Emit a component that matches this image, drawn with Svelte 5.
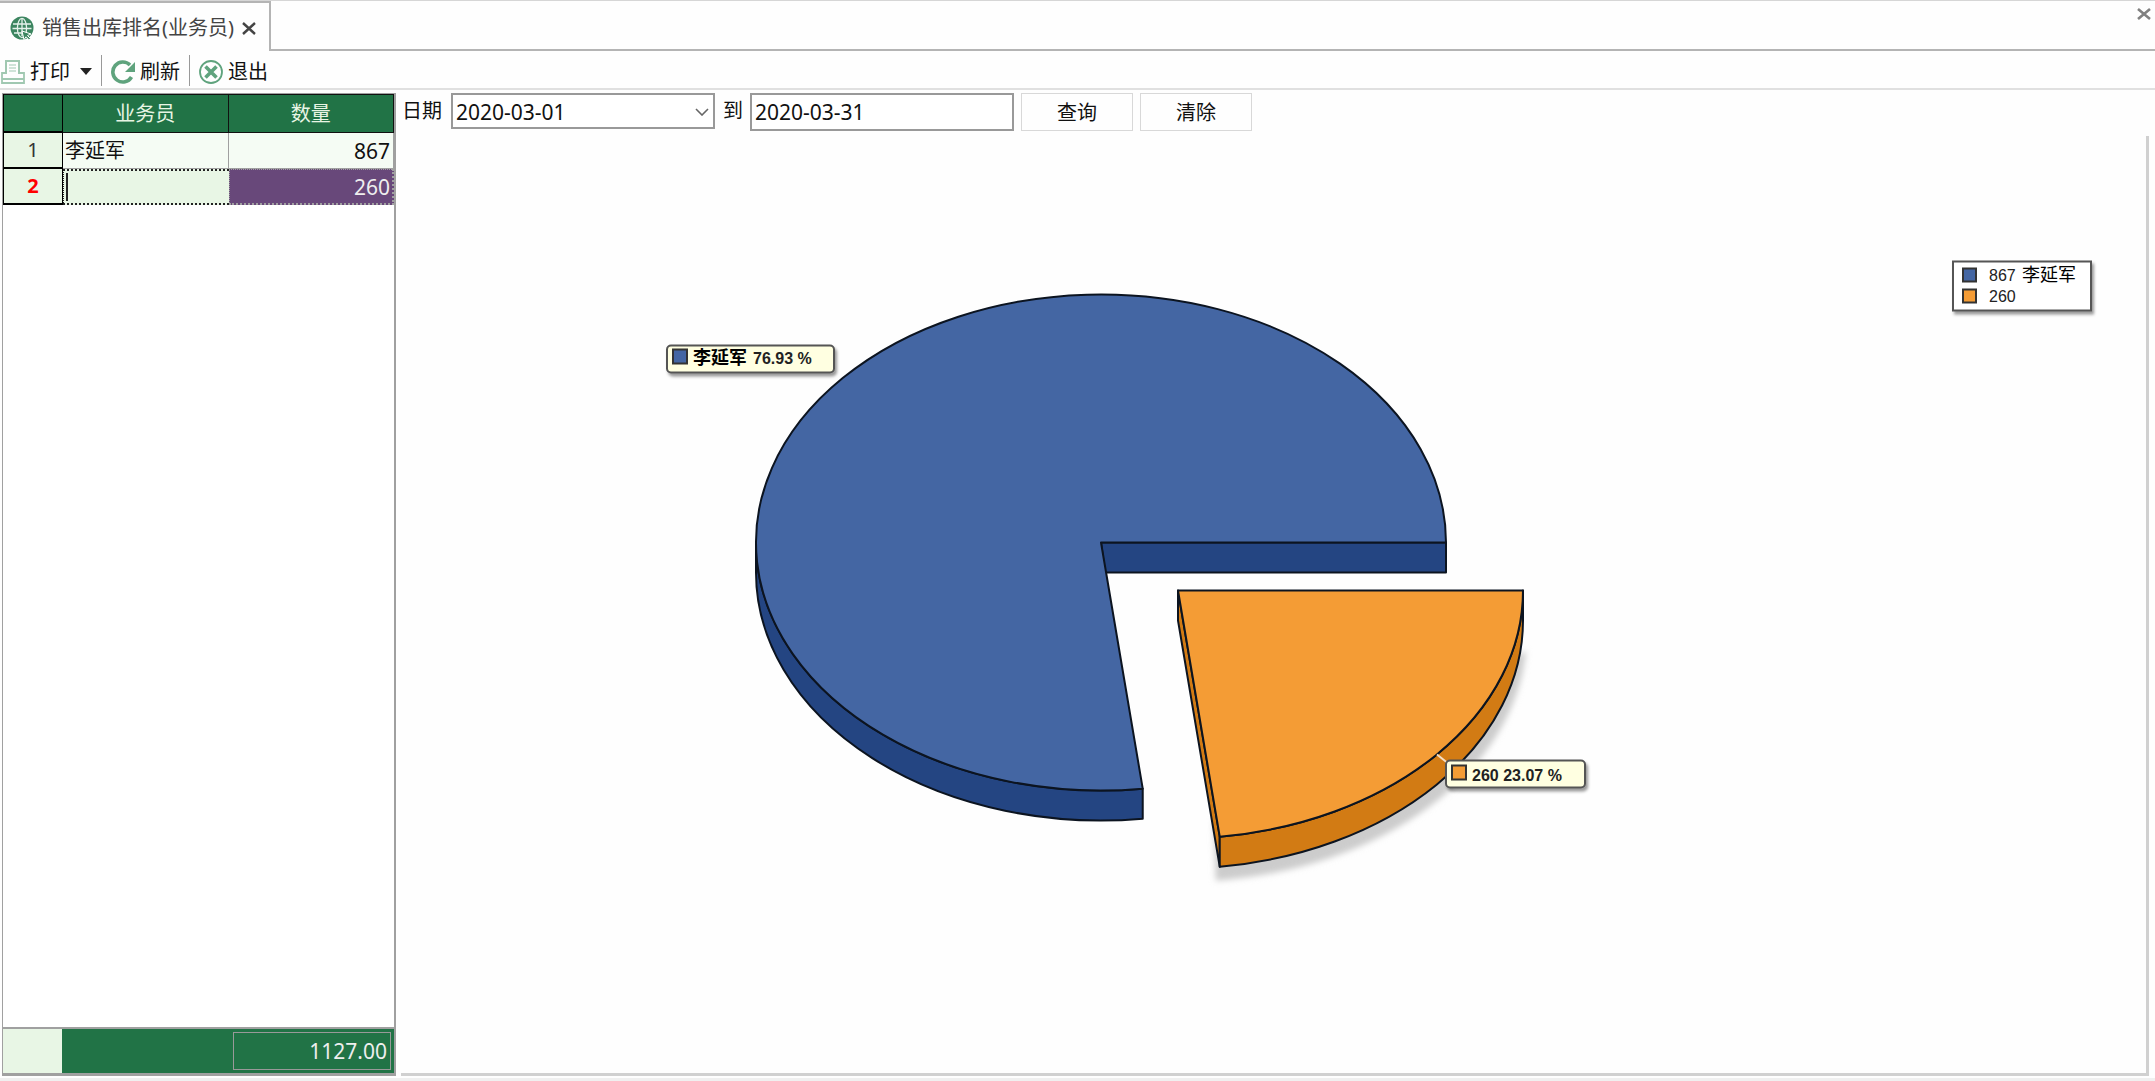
<script lang="ts">
	type Row = { name: string; qty: number };

	const rows: Row[] = [
		{ name: '李延军', qty: 867 },
		{ name: '', qty: 260 }
	];

	let selected = $state(1);
	let dateFrom = $state('2020-03-01');
	let dateTo = $state('2020-03-31');

	const total = rows.reduce((sum, row) => sum + row.qty, 0);

	// pie geometry, in viewBox units
	const rx = 345;
	const ry = 248;
	const depth = 30;
	const blue = { x: 700, y: 406 };
	const orange = { x: 777, y: 454 };
	const angle = (rows[1].qty / total) * Math.PI * 2;
	const cutX = rx * Math.cos(angle);
	const cutY = ry * Math.sin(angle);
</script>

<div class="window">
	<header class="tabs">
		<div class="tab">
			<svg width="24" height="24" viewBox="0 0 24 24" aria-hidden="true">
				<circle cx="12" cy="12" r="11.5" fill="#3c8560" />
				<g fill="none" stroke="#e4f1ea" stroke-width="1.3">
					<ellipse cx="12" cy="12" rx="4.6" ry="9.6" />
					<path d="M12 2v18M3 8h18M2.500 12.500h19M4 17h9" />
				</g>
				<path d="M12 15l9 3-3.500 1.500 3 3-1.500 1.300-3-3-2 3z" fill="#3c8560" stroke="#fff" stroke-width="1" />
			</svg>
			<span>销售出库排名(业务员)</span>
			<button class="close" aria-label="关闭标签">
				<svg width="14" height="14" viewBox="0 0 14 14"><path d="M1 2l12 11M13 2L1 13" stroke="#444" stroke-width="2.400" /></svg>
			</button>
		</div>
		<div class="tab-rest">
			<button class="close" aria-label="关闭">
				<svg width="14" height="14" viewBox="0 0 14 14"><path d="M1 2l12 10M13 2L1 12" stroke="#808080" stroke-width="2.600" /></svg>
			</button>
		</div>
	</header>

	<div class="toolbar">
		<button>
			<svg width="24" height="24" viewBox="0 0 24 24" fill="none" stroke="#a0c8b1" stroke-width="2" aria-hidden="true">
				<path d="M5 14V1h13v13" />
				<path d="M8 5h7M8 8h7M8 11h7" stroke-width="1.200" />
				<path d="M5 13H1v10h22V13h-5M1 19h22" stroke-width="1.800" />
			</svg>
			打印
			<svg class="arrow" width="12" height="7" viewBox="0 0 12 7" aria-hidden="true"><path d="M0 0h12L6 7z" fill="#222" /></svg>
		</button>
		<button>
			<svg width="24" height="24" viewBox="0 0 24 24" aria-hidden="true">
				<path d="M20.500 17A10 10 0 1 1 19 5" fill="none" stroke="#5fa37d" stroke-width="3.600" />
				<path d="M24 2v10H14z" fill="#5fa37d" />
			</svg>
			刷新
		</button>
		<button>
			<svg width="24" height="24" viewBox="0 0 24 24" fill="none" stroke="#5fa37d" aria-hidden="true">
				<circle cx="12" cy="12" r="11" stroke-width="1.800" />
				<path d="M6.500 6.500l11 11M17.500 6.500l-11 11" stroke-width="3.600" />
			</svg>
			退出
		</button>
	</div>

	<main>
		<section class="grid">
			<table>
				<thead>
					<tr>
						<th class="index" aria-label="序号"></th>
						<th>业务员</th>
						<th>数量</th>
					</tr>
				</thead>
				<tbody>
					{#each rows as row, i (i)}
						<tr class:selected={i === selected} onclick={() => (selected = i)}>
							<td class="index">{i + 1}</td>
							<td class="name">{#if i === selected}<span class="caret"></span>{/if}{row.name}</td>
							<td class="qty">{row.qty}</td>
						</tr>
					{/each}
				</tbody>
			</table>
			<div class="summary">
				<span class="gutter"></span>
				<output>{total.toFixed(2)}</output>
			</div>
		</section>

		<section class="report">
			<form class="query" onsubmit={(e) => e.preventDefault()}>
				<label for="from">日期</label>
				<div class="combo">
					<select id="from" bind:value={dateFrom}>
						<option>2020-03-01</option>
					</select>
					<svg width="14" height="8" viewBox="0 0 14 8" aria-hidden="true"><path d="M1 1l6 6 6-6" fill="none" stroke="#666" stroke-width="1.600" /></svg>
				</div>
				<label for="to">到</label>
				<input id="to" type="text" bind:value={dateTo} />
				<button type="submit">查询</button>
				<button type="reset">清除</button>
			</form>

			<div class="chart">
				<svg viewBox="0 0 1745 936" role="img" aria-label="销售出库排名">
					<defs>
						<filter id="soft" x="-10%" y="-10%" width="120%" height="120%">
							<feGaussianBlur stdDeviation="3" />
						</filter>
						<filter id="drop" x="-10%" y="-20%" width="120%" height="150%">
							<feDropShadow dx="2" dy="3" stdDeviation="1.500" flood-color="#000" flood-opacity="0.4" />
						</filter>
					</defs>

					<!-- 李延军 -->
					<g class="slice">
						<path
							class="blue-side"
							d="M{blue.x} {blue.y}h{rx}v{depth}H{blue.x + 4}z"
						/>
						<path
							class="blue-side"
							d="M{blue.x - rx} {blue.y}v{depth}A{rx} {ry} 0 0 0 {blue.x + cutX} {blue.y + depth + cutY}v{-depth}A{rx} {ry} 0 0 1 {blue.x - rx} {blue.y}z"
						/>
						<path
							class="blue-top"
							d="M{blue.x} {blue.y}L{blue.x + cutX} {blue.y + cutY}A{rx} {ry} 0 1 1 {blue.x + rx} {blue.y}z"
						/>
					</g>

					<!-- 260 -->
					<path
						class="shadow"
						filter="url(#soft)"
						d="M{orange.x + cutX - 4} {orange.y + cutY + depth + 14}l-2 -60L{orange.x + rx + 3} {orange.y + 60}A{rx} {ry} 0 0 1 {orange.x + cutX - 4} {orange.y + cutY + depth + 14}z"
					/>
					<g class="slice">
						<path
							class="orange-side"
							d="M{orange.x} {orange.y}v{depth}L{orange.x + cutX} {orange.y + cutY + depth}v{-depth}z"
						/>
						<path
							class="orange-side"
							d="M{orange.x + rx} {orange.y}v{depth}A{rx} {ry} 0 0 1 {orange.x + cutX} {orange.y + cutY + depth}v{-depth}A{rx} {ry} 0 0 0 {orange.x + rx} {orange.y}z"
						/>
						<path
							class="orange-top"
							d="M{orange.x} {orange.y}H{orange.x + rx}A{rx} {ry} 0 0 1 {orange.x + cutX} {orange.y + cutY}z"
						/>
					</g>
					<path d="M1036 618l10 8" stroke="#f6dfc4" stroke-width="2" />

					<g class="tip">
						<rect class="box" x="266" y="209" width="167" height="27" rx="4" filter="url(#drop)" />
						<rect class="swatch blue-top" x="272" y="213" width="14" height="14" />
						<text x="292" y="227"><tspan class="cjk">李延军</tspan><tspan x="352">76.93 %</tspan></text>
					</g>
					<g class="tip">
						<rect class="box" x="1045" y="624" width="139" height="27" rx="4" filter="url(#drop)" />
						<rect class="swatch orange-top" x="1051" y="629" width="14" height="14" />
						<text x="1071" y="644">260 23.07 %</text>
					</g>

					<g class="legend">
						<rect class="box" x="1552" y="125" width="138" height="49" filter="url(#drop)" />
						<rect class="swatch blue-top" x="1562" y="132" width="13" height="13" />
						<text x="1588" y="144">867<tspan class="cjk" x="1621">李延军</tspan></text>
						<rect class="swatch orange-top" x="1562" y="153" width="13" height="13" />
						<text x="1588" y="165">260</text>
					</g>
				</svg>
			</div>
		</section>
	</main>
</div>

<style>
	:global(body) {
		margin: 0;
		background: #fefefe;
	}

	.window {
		display: flex;
		flex-direction: column;
		box-sizing: border-box;
		height: 100vh;
		border-top: 1px solid #d6d6d6;
		border-bottom: 3px solid #f0f0f0;
		color: #111;
		font-family: 'Noto Sans', 'Noto Sans CJK SC', sans-serif;
		font-size: 20px;
		line-height: 28px;
	}

	button,
	input,
	select {
		box-sizing: border-box;
		margin: 0;
		border: 0;
		background: none;
		color: inherit;
		font: inherit;
	}

	svg {
		display: block;
		flex: none;
	}

	.tabs {
		display: flex;
		height: 50px;
	}

	.tab {
		display: flex;
		align-items: center;
		box-sizing: border-box;
		padding: 2px 13px 0 10px;
		border-top: 2px solid #b4b4b4;
		border-right: 2px solid #b4b4b4;
		color: #444;
	}

	.tab span {
		margin: 0 8px;
	}

	.close {
		padding: 0;
	}

	.tab-rest {
		display: flex;
		flex: 1;
		align-items: flex-start;
		justify-content: flex-end;
		padding: 6px 4px 0 0;
		border-bottom: 2px solid #b4b4b4;
	}

	.toolbar {
		display: flex;
		align-items: center;
		height: 35px;
		padding-top: 2px;
		border-bottom: 2px solid #e0e0e0;
	}

	.toolbar button {
		display: flex;
		align-items: center;
		gap: 5px;
		height: 31px;
		padding: 2px 9px 0;
	}

	.toolbar button + button {
		border-left: 1px solid #999;
	}

	.toolbar button:first-child {
		padding-left: 1px;
	}

	.arrow {
		margin-left: 5px;
	}

	main {
		display: flex;
		flex: 1;
		gap: 5px;
		min-height: 0;
		padding: 3px 6px 2px 2px;
	}

	.grid {
		display: flex;
		flex: none;
		flex-direction: column;
		justify-content: space-between;
		box-sizing: border-box;
		width: 394px;
		border: 1px solid #a0a0a0;
		border-width: 1px 2px 3px 1px;
		background: #fff;
	}

	table {
		width: 100%;
		table-layout: fixed;
		border-collapse: separate;
		border-spacing: 0;
	}

	th,
	td {
		box-sizing: border-box;
		height: 36px;
		padding: 0 3px;
		border-right: 1px solid #a0a0a0;
		border-bottom: 1px solid #a0a0a0;
		background: #f5fcf4;
	}

	th {
		height: 39px;
		border: 1px solid #111;
		border-left: 0;
		background: #217346;
		color: #e8f5e4;
		font-weight: 400;
	}

	.index {
		width: 60px;
		border-right: 1px solid #000;
		border-bottom: 2px solid #000;
		border-left: 1px solid #000;
		text-align: center;
	}

	td.index {
		background: #e8f6e5;
		color: #333;
	}

	td.name {
		padding-left: 2px;
	}

	.qty {
		font-size: 21px;
		text-align: right;
	}

	.selected .index {
		color: #f00;
		font-weight: 700;
	}

	.selected .name {
		border: 2px dotted #222;
		border-width: 2px 0 2px 1px;
		background: #e8f6e5;
	}

	.selected .qty {
		border: 2px dotted #a0a0a0;
		border-width: 1px 2px 2px 1px;
		padding-right: 2px;
		background: #68487a;
		color: #eee;
	}

	.caret {
		display: block;
		width: 2px;
		height: 28px;
		background: #222;
	}

	.summary {
		display: flex;
		justify-content: space-between;
		box-sizing: border-box;
		height: 46px;
		border-top: 2px solid #a0a0a0;
		background: #217346;
	}

	.gutter {
		width: 59px;
		background: #e8f6e5;
	}

	output {
		box-sizing: border-box;
		width: 158px;
		margin: 3px;
		padding: 4px 3px;
		border: 1px solid #999;
		color: #eee;
		font-size: 21px;
		text-align: right;
	}

	.report {
		display: flex;
		flex: 1;
		flex-direction: column;
		min-width: 0;
	}

	.query {
		display: flex;
		align-items: flex-start;
		gap: 7px;
		height: 43px;
	}

	.query label {
		padding: 3px 0 3px 1px;
		line-height: 30px;
	}

	.combo {
		position: relative;
		margin-left: 2px;
	}

	.combo svg {
		position: absolute;
		top: 15px;
		right: 6px;
		pointer-events: none;
	}

	select,
	input {
		width: 264px;
		height: 36px;
		padding: 2px 3px 0;
		border: 2px solid #999;
		background: #fff;
		font-size: 21px;
		appearance: none;
	}

	input {
		height: 38px;
		padding-top: 0;
	}

	.query button {
		width: 112px;
		height: 38px;
		padding-top: 2px;
		border: 1px solid #d8d8d8;
	}

	.chart {
		flex: 1;
		min-height: 0;
		border-right: 3px solid #d0d0d0;
		border-bottom: 3px solid #d0d0d0;
	}

	.chart svg {
		width: 100%;
		height: 100%;
	}

	.slice path {
		stroke: #0c1420;
		stroke-width: 2px;
		stroke-linejoin: round;
	}

	.blue-top {
		fill: #4466a3;
	}

	.blue-side {
		fill: #244582;
	}

	.orange-top {
		fill: #f49c35;
	}

	.orange-side {
		fill: #d27b14;
	}

	.shadow {
		fill: #ccc;
	}

	.box {
		fill: #fff;
		stroke: #555;
		stroke-width: 2px;
	}

	.tip .box {
		fill: #ffffe1;
	}

	.swatch {
		stroke: #333;
		stroke-width: 2px;
	}

	.tip text,
	.legend text {
		fill: #222;
		font-family: 'Liberation Sans', 'Noto Sans CJK SC', sans-serif;
		font-size: 16px;
	}

	.tip text {
		font-weight: 700;
	}

	.tip .cjk,
	.legend .cjk {
		fill: #000;
		font-size: 18px;
	}
</style>
